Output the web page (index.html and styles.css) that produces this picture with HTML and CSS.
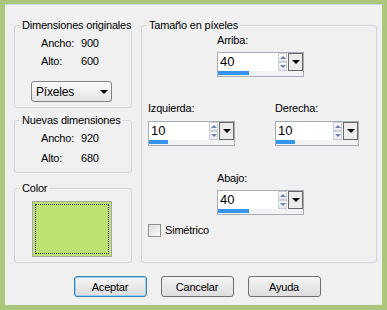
FILE: index.html
```html
<!DOCTYPE html>
<html lang="es">
<head>
  <meta charset="UTF-8">
  <title>Tamaño del lienzo</title>
  <link rel="stylesheet" href="styles.css">
</head>
<body>
  <div class="window">
    <div class="panels">
      <div class="col-left">
        <fieldset class="group">
          <legend>Dimensiones originales</legend>
          <div class="inner orig">
            <div class="row"><span class="k">Ancho:</span><span>900</span></div>
            <div class="row"><span class="k">Alto:</span><span>600</span></div>
            <div class="select">Píxeles<span class="caret"></span></div>
          </div>
        </fieldset>

        <fieldset class="group nuevas">
          <legend>Nuevas dimensiones</legend>
          <div class="inner">
            <div class="row"><span class="k">Ancho:</span><span>920</span></div>
            <div class="row"><span class="k">Alto:</span><span>680</span></div>
          </div>
        </fieldset>

        <fieldset class="group color">
          <legend>Color</legend>
          <div class="inner">
            <div class="swatch"><div class="focus"></div></div>
          </div>
        </fieldset>
      </div>

      <fieldset class="group size">
        <legend>Tamaño en píxeles</legend>
        <div class="inner">
          <div class="field center">
            <div class="lbl">Arriba:</div>
            <div class="spin">
              <div class="spin-top">
                <span class="val">40</span>
                <div class="arrows"><i class="up"></i><i class="dn"></i></div>
                <div class="drop"><span class="caret"></span></div>
              </div>
              <div class="track"><div class="fill" style="width:31px"></div></div>
            </div>
          </div>

          <div class="pair">
            <div class="field side">
              <div class="lbl">Izquierda:</div>
              <div class="spin">
                <div class="spin-top">
                  <span class="val">10</span>
                  <div class="arrows"><i class="up"></i><i class="dn"></i></div>
                  <div class="drop"><span class="caret"></span></div>
                </div>
                <div class="track"><div class="fill" style="width:19px"></div></div>
              </div>
            </div>
            <div class="field">
              <div class="lbl">Derecha:</div>
              <div class="spin narrow">
                <div class="spin-top">
                  <span class="val">10</span>
                  <div class="arrows"><i class="up"></i><i class="dn"></i></div>
                  <div class="drop"><span class="caret"></span></div>
                </div>
                <div class="track"><div class="fill" style="width:19px"></div></div>
              </div>
            </div>
          </div>

          <div class="field center low">
            <div class="lbl">Abajo:</div>
            <div class="spin">
              <div class="spin-top">
                <span class="val">40</span>
                <div class="arrows"><i class="up"></i><i class="dn"></i></div>
                <div class="drop"><span class="caret"></span></div>
              </div>
              <div class="track"><div class="fill" style="width:31px"></div></div>
            </div>
          </div>

          <label class="check"><span class="box"></span>Simétrico</label>
        </div>
      </fieldset>
    </div>

    <div class="buttons">
      <button class="btn default">Aceptar</button>
      <button class="btn">Cancelar</button>
      <button class="btn">Ayuda</button>
    </div>
  </div>
</body>
</html>
```

FILE: styles.css
```css
body {
  margin: 0;
  font-family: 'Liberation Sans', Arial, sans-serif;
  font-size: 11px;
  color: #000;
}

.window {
  width: 387px;
  height: 310px;
  box-sizing: border-box;
  background: #f0f0f0;
  border: 5px solid #aac77b;
  border-top-width: 4px;
  box-shadow: inset 0 1px #c6d6ee;
  padding: 15px 5px 0 9px;
  letter-spacing: -0.2px;
}

.panels {
  display: flex;
  gap: 9px;
}

.col-left {
  width: 118px;
  display: flex;
  flex-direction: column;
}

/* Group boxes */
.group {
  margin: 0;
  padding: 0;
  border: 1px solid #d3d6d9;
  border-radius: 3px;
  min-width: 0;
}

.group legend {
  margin-left: 5px;
  padding: 0 2px;
  line-height: 13px;
  white-space: nowrap;
}

.inner {
  padding: 5px 0 5px 26px;
}

.row {
  display: flex;
  line-height: 13px;
}

.row + .row {
  margin-top: 5px;
}

.k {
  width: 40px;
}

.nuevas {
  margin-top: 6px;
}

.nuevas .inner {
  padding-bottom: 7px;
}

.nuevas .row + .row {
  margin-top: 7px;
}

.color {
  margin-top: 9px;
  flex: 1;
}

.color .inner {
  padding: 6px 0 5px 17px;
}

.select {
  margin: 13px 0 0 -10px;
  width: 81px;
  height: 21px;
  box-sizing: border-box;
  border: 1px solid #7f8386;
  border-radius: 3px;
  background: linear-gradient(#fbfbfb, #e4e4e4);
  display: flex;
  align-items: center;
  justify-content: space-between;
  padding: 0 3px 0 4px;
  font-size: 12px;
}

.caret {
  width: 0;
  height: 0;
  border-left: 4px solid transparent;
  border-right: 4px solid transparent;
  border-top: 4px solid #000;
}

.swatch {
  width: 80px;
  height: 56px;
  box-sizing: border-box;
  border: 1px solid #a4a4a4;
  background: #bde274;
  padding: 2px;
}

.focus {
  height: 100%;
  box-sizing: border-box;
  border: 1px dotted #2a2a8a;
}

/* Tamaño en píxeles */
.size {
  width: 236px;
  box-sizing: border-box;
}

.size .inner {
  padding: 2px 0 0 6px;
}

.lbl {
  line-height: 13px;
}

.field .spin {
  margin-top: 5px;
}

.center {
  margin-left: 69px;
}

.pair {
  display: flex;
  margin-top: 25px;
}

.pair .spin {
  margin-top: 6px;
}

.side {
  width: 127px;
}

.low {
  margin-top: 26px;
}

.spin {
  width: 87px;
  height: 25px;
  box-sizing: border-box;
  border: 1px solid #a7adb4;
  background: #fff;
  display: flex;
  flex-direction: column;
}

.spin.narrow {
  width: 84px;
}

.spin-top {
  flex: 1;
  display: flex;
}

.val {
  flex: 1;
  padding-left: 2px;
  font-size: 13px;
  line-height: 18px;
  letter-spacing: 0;
}

.arrows {
  width: 9px;
  display: flex;
  flex-direction: column;
  margin-right: 1px;
}

.arrows i {
  flex: 1;
  display: flex;
  align-items: center;
  justify-content: center;
  background: linear-gradient(#fdfdfd, #e6e9ef);
  border: 1px solid #c9ced8;
}

.arrows i::before {
  content: '';
  border-left: 3px solid transparent;
  border-right: 3px solid transparent;
}

.arrows .up::before {
  border-bottom: 3px solid #6f7fb4;
}

.arrows .dn::before {
  border-top: 3px solid #6f7fb4;
}

.drop {
  width: 15px;
  box-sizing: border-box;
  border: 1px solid #666;
  background: #ececec;
  display: flex;
  align-items: center;
  justify-content: center;
}

.track {
  height: 5px;
  background: #f2f2f2;
}

.fill {
  height: 4px;
  background: #3594ee;
}

.check {
  display: flex;
  align-items: center;
  margin-top: 9px;
  line-height: 13px;
}

.check .box {
  width: 13px;
  height: 13px;
  box-sizing: border-box;
  border: 1px solid #8e8f8f;
  background: linear-gradient(135deg, #dcdcdc, #fbfbfb);
  margin-right: 4px;
}

/* Buttons */
.buttons {
  display: flex;
  justify-content: center;
  gap: 14px;
  margin-top: 13px;
  padding-left: 3px;
}

.btn {
  width: 73px;
  height: 21px;
  border: 1px solid #707070;
  border-radius: 3px;
  background: linear-gradient(#f4f4f4, #dedede);
  font-family: 'Liberation Sans', Arial, sans-serif;
  font-size: 11px;
  letter-spacing: -0.2px;
  padding: 0;
  color: #000;
}

.btn.default {
  border-color: #3c7fb1;
  box-shadow: inset 0 0 0 1px #98d2f2;
}
```
